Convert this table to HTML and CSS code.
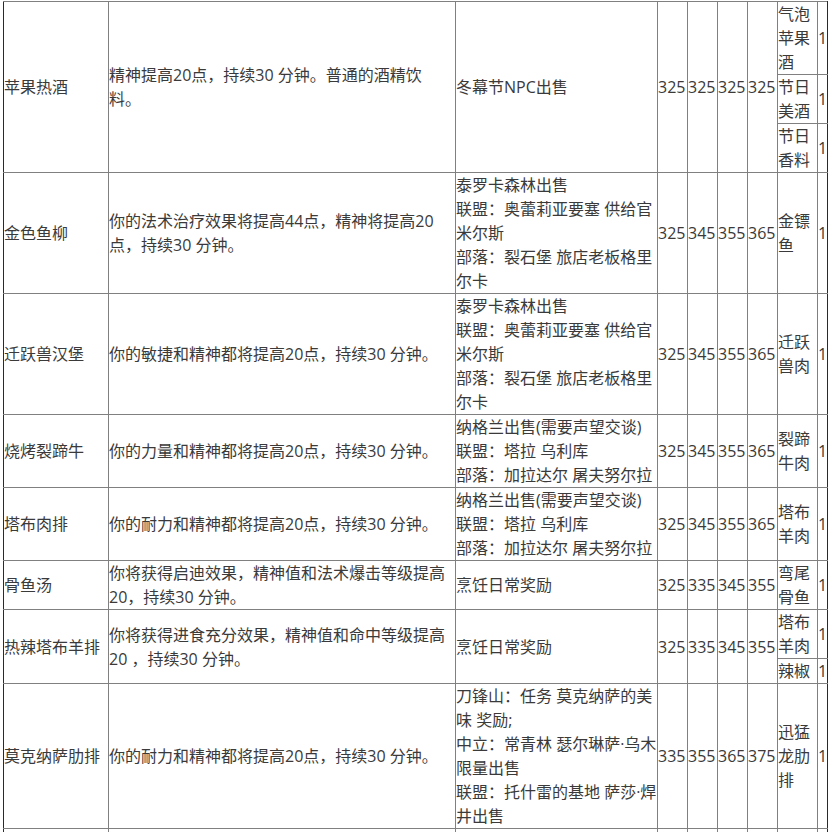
FILE: index.html
```html
<!DOCTYPE html>
<html lang="zh-CN">
<head>
<meta charset="utf-8">
<title>烹饪食物</title>
<link rel="stylesheet" href="styles.css">
</head>
<body>
<table class="food">
  <colgroup>
    <col class="c-name"><col class="c-desc"><col class="c-src">
    <col class="c-num"><col class="c-num"><col class="c-num"><col class="c-num">
    <col class="c-ing"><col class="c-cnt">
  </colgroup>
  <tbody>
    <tr>
      <td rowspan="3">苹果热酒</td>
      <td rowspan="3" class="lines">精神提高20点，持续30 分钟。普通的酒精饮<br>料。</td>
      <td rowspan="3" class="lines">冬幕节NPC出售</td>
      <td rowspan="3">325</td><td rowspan="3">325</td><td rowspan="3">325</td><td rowspan="3">325</td>
      <td>气泡苹果酒</td><td>1</td>
    </tr>
    <tr><td>节日美酒</td><td>1</td></tr>
    <tr><td>节日香料</td><td>1</td></tr>
    <tr>
      <td>金色鱼柳</td>
      <td class="lines">你的法术治疗效果将提高44点，精神将提高20<br>点，持续30 分钟。</td>
      <td class="lines">泰罗卡森林出售<br>联盟：奥蕾莉亚要塞 供给官<br>米尔斯<br>部落：裂石堡 旅店老板格里<br>尔卡</td>
      <td>325</td><td>345</td><td>355</td><td>365</td>
      <td>金镖鱼</td><td>1</td>
    </tr>
    <tr>
      <td>迁跃兽汉堡</td>
      <td class="lines">你的敏捷和精神都将提高20点，持续30 分钟。</td>
      <td class="lines">泰罗卡森林出售<br>联盟：奥蕾莉亚要塞 供给官<br>米尔斯<br>部落：裂石堡 旅店老板格里<br>尔卡</td>
      <td>325</td><td>345</td><td>355</td><td>365</td>
      <td>迁跃兽肉</td><td>1</td>
    </tr>
    <tr>
      <td>烧烤裂蹄牛</td>
      <td class="lines">你的力量和精神都将提高20点，持续30 分钟。</td>
      <td class="lines">纳格兰出售(需要声望交谈)<br>联盟：塔拉 乌利库<br>部落：加拉达尔 屠夫努尔拉</td>
      <td>325</td><td>345</td><td>355</td><td>365</td>
      <td>裂蹄牛肉</td><td>1</td>
    </tr>
    <tr>
      <td>塔布肉排</td>
      <td class="lines">你的耐力和精神都将提高20点，持续30 分钟。</td>
      <td class="lines">纳格兰出售(需要声望交谈)<br>联盟：塔拉 乌利库<br>部落：加拉达尔 屠夫努尔拉</td>
      <td>325</td><td>345</td><td>355</td><td>365</td>
      <td>塔布羊肉</td><td>1</td>
    </tr>
    <tr>
      <td>骨鱼汤</td>
      <td class="lines">你将获得启迪效果，精神值和法术爆击等级提高<br>20，持续30 分钟。</td>
      <td class="lines">烹饪日常奖励</td>
      <td>325</td><td>335</td><td>345</td><td>355</td>
      <td>弯尾骨鱼</td><td>1</td>
    </tr>
    <tr>
      <td rowspan="2">热辣塔布羊排</td>
      <td rowspan="2" class="lines">你将获得进食充分效果，精神值和命中等级提高<br>20 ，持续30 分钟。</td>
      <td rowspan="2" class="lines">烹饪日常奖励</td>
      <td rowspan="2">325</td><td rowspan="2">335</td><td rowspan="2">345</td><td rowspan="2">355</td>
      <td>塔布羊肉</td><td>1</td>
    </tr>
    <tr><td>辣椒</td><td>1</td></tr>
    <tr>
      <td>莫克纳萨肋排</td>
      <td class="lines">你的耐力和精神都将提高20点，持续30 分钟。</td>
      <td class="lines">刀锋山：任务 莫克纳萨的美<br>味 奖励;<br>中立：常青林 瑟尔琳萨·乌木<br>限量出售<br>联盟：托什雷的基地 萨莎·焊<br>井出售</td>
      <td>335</td><td>355</td><td>365</td><td>375</td>
      <td>迅猛龙肋排</td><td>1</td>
    </tr>
    <tr class="more">
      <td></td><td></td><td></td><td></td><td></td><td></td><td></td><td></td><td></td>
    </tr>
  </tbody>
</table>
</body>
</html>
```

FILE: styles.css
```css
html, body {
  margin: 0;
  padding: 0;
  background: #ffffff;
}

body {
  font-family: "Open Sans", "Noto Sans CJK SC", sans-serif;
  font-size: 16px;
  line-height: 24px;
  color: #3a3a3a;
}

.food {
  margin: 1px 0 0 3px;
  width: 825px;
  table-layout: fixed;
  border-collapse: collapse;
  border-left: 1px solid #2a2a2a;
  border-right: 1px solid #2a2a2a;
}

.c-name { width: 105px; }
.c-desc { width: 347px; }
.c-src  { width: 202px; }
.c-num  { width: 30px; }
.c-ing  { width: 40px; }
.c-cnt  { width: 10px; }

.food td {
  border: 1px solid #808080;
  padding: 0;
  vertical-align: middle;
  text-align: left;
  overflow: hidden;
}

.food td:first-child {
  border-left-color: #2a2a2a;
}

.food td:last-child {
  border-right-color: #2a2a2a;
}

.food td.lines {
  white-space: nowrap;
}

.food tr.more td {
  height: 24px;
}
```
